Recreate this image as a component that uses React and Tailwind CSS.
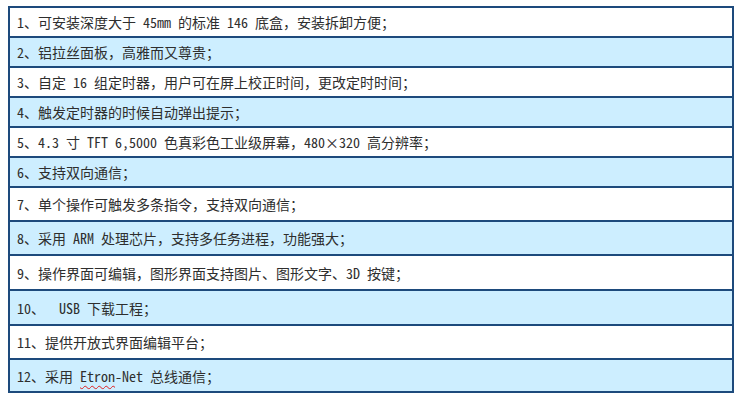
import React from 'react';

// feature list rows: text, row height (incl. top border), background
const rows = [
  { text: '1、可安装深度大于 45mm 的标准 146 底盒，安装拆卸方便；', h: 'h-[28px]' },
  { text: '2、铝拉丝面板，高雅而又尊贵；', h: 'h-[30px]' },
  { text: '3、自定 16 组定时器，用户可在屏上校正时间，更改定时时间；', h: 'h-[30px]' },
  { text: '4、触发定时器的时候自动弹出提示；', h: 'h-[30px]' },
  { text: '5、4.3 寸 TFT 6,5000 色真彩色工业级屏幕，480×320 高分辨率；', h: 'h-[30px]' },
  { text: '6、支持双向通信；', h: 'h-[30px]' },
  { text: '7、单个操作可触发多条指令，支持双向通信；', h: 'h-[34px]' },
  { text: '8、采用 ARM 处理芯片，支持多任务进程，功能强大；', h: 'h-[34px]' },
  { text: '9、操作界面可编辑，图形界面支持图片、图形文字、3D 按键；', h: 'h-[35px]' },
  { text: '10、  USB 下载工程；', h: 'h-[35px]' },
  { text: '11、提供开放式界面编辑平台；', h: 'h-[34px]' },
  { text: 'etron', h: 'h-[33px]' },
];

const FeatureRow = ({ row, index }) => {
  const shaded = index % 2 === 1;
  return (
    <div
      className={`flex items-center pl-[7px] ${row.h} ${index > 0 ? 'border-t-2 border-[#1d4a7c]' : ''} ${shaded ? 'bg-[#cdeeff]' : 'bg-white'}`}
    >
      {row.text === 'etron' ? (
        <span className="whitespace-pre">
          12、采用 <span className="underline decoration-wavy decoration-[#e02020] decoration-1 underline-offset-[3px]">Etron</span>-Net 总线通信；
        </span>
      ) : (
        <span className="whitespace-pre">{row.text}</span>
      )}
    </div>
  );
};

export default function App() {
  return (
    <div className="w-[739px] h-[397px] bg-white pt-[6px] pl-[8px] font-['Noto_Sans_Mono_CJK_SC','Noto_Sans_CJK_SC',monospace] text-[14px] leading-none text-[#2e2e2e]">
      <div className="w-[726px] border-2 border-[#1d4a7c]">
        {rows.map((row, i) => (
          <FeatureRow key={i} row={row} index={i} />
        ))}
      </div>
    </div>
  );
}
